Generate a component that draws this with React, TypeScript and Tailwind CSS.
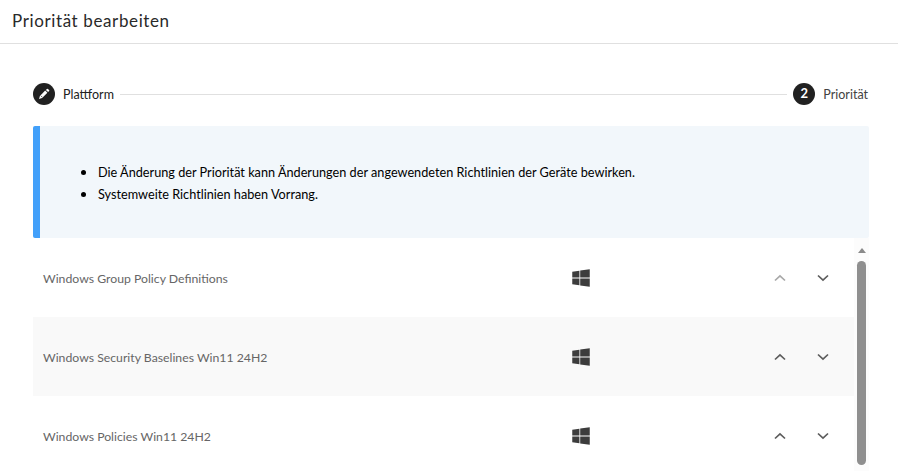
import { FaWindows } from 'react-icons/fa';

const rows = [
  { name: 'Windows Group Policy Definitions', first: true },
  { name: 'Windows Security Baselines Win11 24H2', first: false },
  { name: 'Windows Policies Win11 24H2', first: false },
];

const Chevron = ({ up, faded }: { up?: boolean; faded?: boolean }) => (
  <svg width="12" height="8" viewBox="0 0 12 8" fill="none" className={faded ? 'text-[#a8a8a8]' : 'text-[#5c5c5c]'}>
    <path d={up ? 'M1 6.5 L6 1.8 L11 6.5' : 'M1 1.5 L6 6.2 L11 1.5'} stroke="currentColor" strokeWidth="1.7" />
  </svg>
);

export default function App() {
  return (
    <div className="w-[898px] h-[471px] overflow-hidden bg-white font-['Lato',sans-serif]">
      {/* Header */}
      <div className="h-[44px] border-b border-[#e0e0e0] pl-3 pb-[2px] flex items-center">
        <h1 className="text-[17px] tracking-[0.62px] text-[#2a2a2a]">Priorität bearbeiten</h1>
      </div>

      <div className="pr-[29px] pl-[33px]">
        {/* Stepper */}
        <div className="mt-[39px] mr-px h-[22px] flex items-center">
          <div className="w-[22px] h-[22px] rounded-full bg-[#212121] flex items-center justify-center">
            <svg width="14" height="14" viewBox="0 0 14 14" fill="none">
              <path d="M2 12 L2.9 8.9 L8.2 3.6 L10.4 5.8 L5.1 11.1 Z" fill="#ffffff" />
              <path d="M8.9 2.9 L9.9 1.9 Q10.4 1.5 10.9 1.9 L12.1 3.1 Q12.5 3.6 12.1 4.1 L11.1 5.1 Z" fill="#ffffff" />
              <path d="M3.9 8.8 L5.2 10.1" stroke="#212121" strokeWidth="0.7" />
            </svg>
          </div>
          <span className="ml-2 pt-[3px] text-[12.5px] text-[#212121]">Plattform</span>
          <div className="flex-1 h-px bg-[#e0e0e0] mx-[6px]" />
          <div className="w-[22px] h-[22px] rounded-full bg-[#212121] text-white flex items-center justify-center text-[13px] font-bold">
            2
          </div>
          <span className="ml-2 pt-[3px] text-[12.5px] text-[#424242]">Priorität</span>
        </div>

        {/* Hint box */}
        <div className="mt-[21px] h-[112px] bg-[#f2f7fb] border-l-[7px] border-[#42a0fa] rounded-[2px] flex items-center">
          <ul className="list-disc pl-[58px] text-[12.7px] leading-[22px] text-black marker:text-[16px]">
            <li className="h-[22px]">Die Änderung der Priorität kann Änderungen der angewendeten Richtlinien der Geräte bewirken.</li>
            <li className="h-[22px]">Systemweite Richtlinien haben Vorrang.</li>
          </ul>
        </div>

        {/* Policy list */}
        <div className="flex h-[233px] overflow-hidden">
          <div className="flex-1">
            {rows.map((row, i) => (
              <div
                key={row.name}
                className={`h-[79px] flex items-center pl-[10px] ${i === 1 ? 'bg-[#f9f9f9]' : 'bg-white'}`}
              >
                <span className="w-[528px] pt-[4px] text-[12.25px] text-[#666666]">{row.name}</span>
                <FaWindows size={20} className="text-[#3c3c3c]" />
                <div className="ml-[183px] flex items-center gap-[31px]">
                  <Chevron up faded={row.first} />
                  <Chevron />
                </div>
              </div>
            ))}
          </div>
          {/* Scrollbar */}
          <div className="w-[15px] bg-[#fcfcfc] flex flex-col items-center">
            <div className="mt-[10px] w-0 h-0 border-x-[4.5px] border-x-transparent border-b-[5px] border-b-[#8a8a8a]" />
            <div className="mt-[8px] w-[9px] h-[204px] rounded-[5px] bg-[#8f8f8f]" />
          </div>
        </div>
      </div>
    </div>
  );
}
